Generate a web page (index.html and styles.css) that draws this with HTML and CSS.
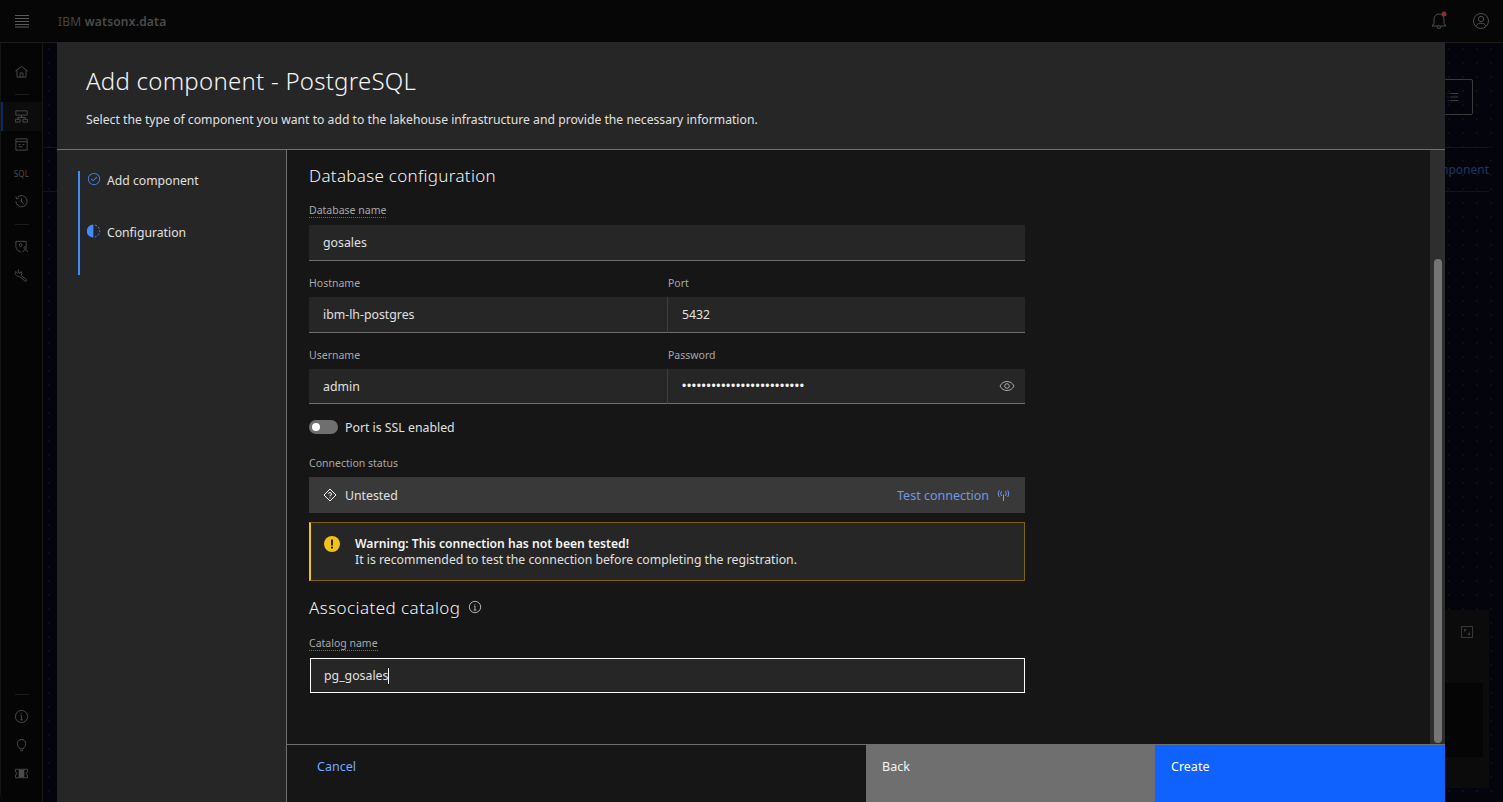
FILE: index.html
```html
<!DOCTYPE html>
<html>
<head>
<title>IBM watsonx.data - Add component</title>
<link rel="stylesheet" href="styles.css">
</head>

<body>
<div class="app">
  <header class="topbar">
    <svg class="menu-icon" viewBox="0 0 16 14"><path d="M1 1.500h14M1 4.500h14M1 7.500h14M1 10.500h14M1 13h14"/></svg>
    <div class="brand">IBM <b>watsonx.data</b></div>
    <div class="top-icons">
      <svg class="ico-bell" viewBox="0 0 20 20"><path d="M3 15l2-2.500V8a5 5 0 0 1 10 0v4.500l2 2.500zM8 15.500a2 2 0 0 0 4 0"/><circle class="red-dot" cx="15" cy="3" r="2.500"/></svg>
      <svg class="ico-user" viewBox="0 0 20 20"><circle cx="10" cy="10" r="7.500"/><circle cx="10" cy="8" r="2.700"/><path d="M5 15.500c1-2.500 2.500-3.300 5-3.300s4 .8 5 3.300"/></svg>
    </div>
  </header>

  <div class="page">
    <nav class="rail">
      <div class="rail-top">
        <div class="rail-item"><svg viewBox="0 0 16 16"><path d="M1.500 7.500L8 2.500l6.500 5M3.200 6.500V14h9.600V6.500M6.500 14V9.500h3V14"/></svg></div>
        <div class="rail-sep"></div>
        <div class="rail-item current"><svg viewBox="0 0 16 16"><path d="M2 2h12v4.500H2zM8 6.500V9M4 11V9h8v2M1.500 11h5v3h-5zM9.500 11h5v3h-5z"/></svg></div>
        <div class="rail-item"><svg viewBox="0 0 16 16"><path d="M2 2h12v12H2zM2 5h12M5 8h2M9 8h2M5 10.500h4"/></svg></div>
        <div class="rail-item sql">SQL</div>
        <div class="rail-item"><svg viewBox="0 0 16 16"><path d="M4 3.200A6 6 0 1 1 2 8M2 2.500l.8 2.700L5.500 4.500M8 4.500V8l2.500 2.500"/></svg></div>
        <div class="rail-sep"></div>
        <div class="rail-item"><svg viewBox="0 0 16 16"><path d="M2 2.500h11V8M2 2.500V8c0 3 2.500 5 5.500 6"/><circle cx="7" cy="6.500" r="1.500"/><circle cx="12" cy="9.500" r="1.300"/><path d="M9.500 14c0-1.500 1-2.300 2.500-2.300s2.500.8 2.500 2.300"/></svg></div>
        <div class="rail-item"><svg viewBox="0 0 16 16"><path d="M4.500 1.500v3.300l2 .8 1-1.800A3.800 3.800 0 0 1 7.700 8l5.500 4.300c1.200 1.200-.3 2.700-1.500 1.600L6 9c-3 .6-5.500-2-4.300-5.200l2.300 2"/></svg></div>
      </div>
      <div class="rail-bottom">
        <div class="rail-sep"></div>
        <div class="rail-item"><svg viewBox="0 0 16 16"><circle cx="8" cy="8" r="6.500"/><path d="M6.500 11.500h3M8 11.500V7H6.800M8 4.500v.8"/></svg></div>
        <div class="rail-item"><svg viewBox="0 0 16 16"><path d="M6 11.500C5.500 9.800 3.500 9 3.500 6a4.500 4.500 0 0 1 9 0c0 3-2 3.800-2.500 5.500zM6.500 13.500h3"/></svg></div>
        <div class="rail-item"><svg viewBox="0 0 16 16"><path d="M1.500 3.500h13V6.500a1.500 1.500 0 0 0 0 3v3h-13v-3a1.500 1.500 0 0 0 0-3z"/><path class="filled" d="M5 4h6v8H5z"/></svg></div>
      </div>
    </nav>

    <main class="behind">
      <div class="behind-head">
        <div class="behind-btn"><svg viewBox="0 0 16 16"><path d="M3 4h1M6 4h9M3 8h1M6 8h9M3 12h1M6 12h9"/></svg></div>
      </div>
      <div class="behind-tabs"><span>Add component</span></div>
      <div class="behind-panel">
        <svg class="behind-expand" viewBox="0 0 12 12"><path d="M.5.500h11v11H.5z"/><path class="filled" d="M3 3h3L3 6zM9 9H6l3-3z"/></svg>
        <div class="behind-inner"></div>
      </div>
    </main>
  </div>
</div>

<div class="modal">
  <div class="modal-head">
    <h1>Add component - PostgreSQL</h1>
    <p>Select the type of component you want to add to the lakehouse infrastructure and provide the necessary information.</p>
  </div>

  <div class="modal-body">
    <aside class="steps">
      <div class="step-list">
        <div class="step">
          <svg viewBox="0 0 32 32"><path class="solid" d="M14 21.414l-5-5.001L10.413 15 14 18.586 21.585 11 23 12.415 14 21.414z"/><path class="solid" d="M16 2a14 14 0 1 0 14 14A14 14 0 0 0 16 2zm0 26a12 12 0 1 1 12-12 12 12 0 0 1-12 12z"/></svg>
          <span>Add component</span>
        </div>
        <div class="step">
          <svg viewBox="0 0 14 14"><path class="solid" d="M6.300.500A6.500 6.500 0 0 0 6.300 13.500z"/><path class="dash" d="M8 1a6.200 6.200 0 0 1 0 12"/></svg>
          <span>Configuration</span>
        </div>
      </div>
    </aside>

    <section class="content">
      <div class="scroller">
        <form class="form">
          <h2>Database configuration</h2>

          <div class="field">
            <label class="dotted">Database name</label>
            <div class="input">gosales</div>
          </div>

          <div class="row">
            <div class="field">
              <label>Hostname</label>
              <div class="input">ibm-lh-postgres</div>
            </div>
            <div class="field">
              <label>Port</label>
              <div class="input">5432</div>
            </div>
          </div>

          <div class="row">
            <div class="field">
              <label>Username</label>
              <div class="input short">admin</div>
            </div>
            <div class="field">
              <label>Password</label>
              <div class="input short password">
                <span class="dots">&bull;&bull;&bull;&bull;&bull;&bull;&bull;&bull;&bull;&bull;&bull;&bull;&bull;&bull;&bull;&bull;&bull;&bull;&bull;&bull;&bull;&bull;&bull;&bull;&bull;</span>
                <svg class="eye" viewBox="0 0 16 16"><path d="M1 8c1.500-3 4-4.500 7-4.500s5.500 1.500 7 4.500c-1.500 3-4 4.500-7 4.500S2.500 11 1 8z"/><circle cx="8" cy="8" r="2.300"/></svg>
              </div>
            </div>
          </div>

          <div class="toggle-row">
            <span class="toggle"><i></i></span>
            <span>Port is SSL enabled</span>
          </div>

          <div class="field status-field">
            <label>Connection status</label>
            <div class="status">
              <svg class="diamond" viewBox="0 0 14 14"><path d="M7 1l6 6-6 6-6-6z"/><path d="M5.500 5.800A1.500 1.500 0 1 1 7 7.500v.8M7 9.500v.8"/></svg>
              <span class="status-text">Untested</span>
              <a class="test-link">Test connection</a>
              <svg class="antenna" viewBox="0 0 14 14"><path d="M7 6v7M5 2.500c-1.200 1.500-1.200 3.500 0 5M9 2.500c1.200 1.500 1.200 3.500 0 5M2.500 1.500c-1.500 2.500-1.500 5 0 7M11.500 1.500c1.500 2.500 1.500 5 0 7"/></svg>
            </div>
          </div>

          <div class="warning">
            <svg viewBox="0 0 16 16"><circle class="warn-bg" cx="8" cy="8" r="8"/><path class="warn-mark" d="M7.100 3.500h1.800v6H7.100zM7 10.800h2v1.800H7z"/></svg>
            <div>
              <b>Warning: This connection has not been tested!</b><br>
              It is recommended to test the connection before completing the registration.
            </div>
          </div>

          <h2 class="catalog-title">Associated catalog
            <svg viewBox="0 0 16 16"><circle cx="8" cy="8" r="6.500"/><path d="M6.500 11.500h3M8 11.500V7H6.800M8 4.500v.8"/></svg>
          </h2>

          <div class="field">
            <label class="dotted">Catalog name</label>
            <div class="input short focused">pg_gosales<span class="caret"></span></div>
          </div>
        </form>
        <div class="track"><div class="thumb"></div></div>
      </div>

      <footer class="modal-foot">
        <a class="foot-btn cancel">Cancel</a>
        <a class="foot-btn back">Back</a>
        <a class="foot-btn create">Create</a>
      </footer>
    </section>
  </div>
</div>
</body>
</html>
```

FILE: styles.css
```css
html, body {
  margin: 0;
  height: 100%;
  overflow: hidden;
  background-color: #04050c;
  background-image: radial-gradient(#0d0e16 1px, transparent 1.2px);
  background-size: 14px 14px;
  font-family: "Noto Sans", Roboto, Arial, sans-serif;
  font-size: 13px;
  color: #f4f4f4;
}
svg {
  display: block;
  fill: none;
  stroke: currentColor;
  stroke-width: 1;
}
.filled {
  fill: currentColor;
  stroke: none;
}

/* page behind the dialog */
.app {
  height: 802px;
  display: flex;
  flex-direction: column;
}
.topbar {
  height: 43px;
  flex: none;
  display: flex;
  align-items: center;
  background: #060606;
  border-bottom: 1px solid #1b1b1b;
  box-sizing: border-box;
  color: #4b4b4b;
}
.menu-icon {
  width: 16px;
  height: 14px;
  margin-left: 14px;
  color: #5a5a5a;
}
.brand {
  margin-left: 28px;
  font-size: 12px;
  color: #454545;
  letter-spacing: .2px;
}
.brand b {
  font-weight: 600;
  color: #4b4b4b;
}
.top-icons {
  margin-left: auto;
  display: flex;
  align-items: center;
  gap: 22px;
  padding-right: 12px;
  color: #4e4e4e;
}
.ico-bell {
  width: 20px;
  height: 20px;
}
.ico-user {
  width: 20px;
  height: 20px;
}
.red-dot {
  fill: #8c2a2e;
  stroke: none;
}
.page {
  flex: 1;
  display: flex;
  min-height: 0;
}
.rail {
  width: 43px;
  flex: none;
  box-sizing: border-box;
  background: #050505;
  border-right: 1px solid #171717;
  border-left: 1px solid #141414;
  border-bottom-left-radius: 8px;
  display: flex;
  flex-direction: column;
  justify-content: space-between;
  padding: 14px 0;
  color: #4c4c4c;
}
.rail-item {
  height: 28.5px;
  display: flex;
  align-items: center;
  justify-content: center;
}
.rail-item svg {
  width: 15px;
  height: 15px;
}
.rail-item.current {
  background: #0c0c0c;
  box-shadow: inset 2px 0 0 #10295f;
}
.rail-item.sql {
  font-size: 8px;
  letter-spacing: .2px;
}
.rail-sep {
  height: 1px;
  width: 14px;
  margin: 8px auto 7.5px;
  background: #1c1c1c;
}
.behind {
  flex: 1;
  position: relative;
  display: flex;
  flex-direction: column;
  padding-right: 14px;
}
.behind-head {
  height: 105px;
  flex: none;
  border-bottom: 1px solid #151515;
  box-sizing: border-box;
  position: relative;
}
.behind-btn {
  position: absolute;
  right: 16px;
  top: 36px;
  width: 90px;
  height: 36px;
  box-sizing: border-box;
  border: 1px solid #3a3a3a;
  border-radius: 2px;
  color: #464646;
}
.behind-btn svg {
  width: 14px;
  height: 14px;
  position: absolute;
  left: 61px;
  top: 10px;
}
.behind-tabs {
  height: 44px;
  flex: none;
  box-sizing: border-box;
  border-bottom: 1px solid #151515;
  display: flex;
  align-items: center;
  justify-content: flex-end;
  color: #1f3561;
  font-size: 12px;
}
.behind-panel {
  position: absolute;
  right: 14px;
  top: 567px;
  width: 200px;
  height: 178px;
  background: #0b0b0b;
}
.behind-expand {
  position: absolute;
  right: 16px;
  top: 16px;
  width: 12px;
  height: 12px;
  color: #3a3a3a;
}
.behind-inner {
  position: absolute;
  left: 0;
  right: 6px;
  top: 73px;
  height: 74px;
  background: #050505;
}

/* dialog */
.modal {
  position: absolute;
  left: 57px;
  top: 42px;
  width: 1388px;
  height: 760px;
  display: flex;
  flex-direction: column;
  background: #262626;
}
.modal-head {
  height: 108px;
  flex: none;
  box-sizing: border-box;
  padding: 22px 0 0 29px;
  border-bottom: 1px solid #6f6f6f;
}
.modal-head h1 {
  margin: 0;
  font-size: 24px;
  line-height: 34px;
  font-weight: 300;
  letter-spacing: .25px;
  color: #f4f4f4;
}
.modal-head p {
  margin: 13px 0 0;
  font-size: 12.2px;
  line-height: 18px;
  color: #e0e0e0;
}
.modal-body {
  flex: 1;
  display: flex;
  min-height: 0;
}
.steps {
  width: 230px;
  flex: none;
  box-sizing: border-box;
  border-right: 1px solid #6f6f6f;
  padding: 21px 0 0 21px;
}
.step-list {
  height: 104px;
  border-left: 2px solid #4589ff;
  padding-left: 7px;
}
.step {
  height: 52px;
  display: flex;
  gap: 6px;
  font-size: 12.2px;
  line-height: 18px;
  color: #e0e0e0;
}
.step svg {
  width: 14px;
  height: 14px;
  margin-top: 1px;
  flex: none;
}
.step span {
  padding-top: 1px;
}
.solid {
  fill: #4589ff;
  stroke: none;
}
.dash {
  stroke: #4589ff;
  stroke-width: 1;
  stroke-dasharray: 2 1.600;
}
.content {
  flex: 1;
  min-width: 0;
  display: flex;
  flex-direction: column;
  background: #161616;
}
.scroller {
  flex: 1;
  min-height: 0;
  display: flex;
}
.form {
  flex: 1;
  box-sizing: border-box;
  padding: 15px 0 0 22px;
  overflow: hidden;
}
.form > * {
  width: 716px;
}
.form h2 {
  margin: 0;
  font-size: 17px;
  line-height: 22px;
  font-weight: 300;
  letter-spacing: .3px;
  color: #f4f4f4;
}
.field {
  flex: 1;
  min-width: 0;
  margin-top: 15px;
}
.form h2 + .field {
  margin-top: 16px;
}
.form .catalog-title + .field {
  margin-top: 17px;
}
.field label {
  display: table;
  font-size: 10.5px;
  line-height: 14px;
  margin-bottom: 7px;
  color: #a8a8a8;
}
.field .dotted {
  border-bottom: 1px dotted #6f6f6f;
  line-height: 13px;
  padding-top: 1px;
  margin-bottom: 7px;
}
.input {
  height: 36px;
  box-sizing: border-box;
  padding: 0 14px;
  display: flex;
  align-items: center;
  background: #262626;
  border-bottom: 1px solid #6f6f6f;
  font-size: 12.3px;
  color: #e0e0e0;
}
.short {
  height: 35px;
}
.row {
  display: flex;
}
.row .field + .field label {
  margin-left: 1px;
}
.row .field + .field .input {
  border-left: 1px solid #3d3d3d;
}
.password {
  justify-content: space-between;
  padding-right: 10px;
}
.dots {
  font-size: 12px;
  letter-spacing: .7px;
  color: #f4f4f4;
  font-family: "Liberation Sans", sans-serif;
}
.eye {
  width: 16px;
  height: 16px;
  color: #a8a8a8;
}
.toggle-row {
  margin-top: 15px;
  display: flex;
  align-items: center;
  gap: 7px;
  height: 16px;
  font-size: 12.3px;
  color: #e0e0e0;
}
.toggle {
  width: 29px;
  height: 14px;
  border-radius: 7px;
  background: #6f6f6f;
  position: relative;
}
.toggle i {
  position: absolute;
  left: 3px;
  top: 3px;
  width: 8px;
  height: 8px;
  border-radius: 50%;
  background: #fff;
}
.status-field {
  margin-top: 21px;
}
.status {
  height: 36px;
  display: flex;
  align-items: center;
  background: #393939;
  padding: 0 15px 0 14px;
  box-sizing: border-box;
  font-size: 12.3px;
  color: #e0e0e0;
}
.diamond {
  width: 14px;
  height: 14px;
  margin-right: 8px;
  color: #f4f4f4;
}
.status-text {
  flex: 1;
}
.test-link {
  color: #78a9ff;
  opacity: .85;
  font-size: 12.5px;
  margin-right: -1px;
}
.antenna {
  width: 13px;
  height: 13px;
  margin-left: 9px;
  color: #78a9ff;
}
.warning {
  margin-top: 9px;
  height: 59px;
  box-sizing: border-box;
  background: #262626;
  border: 1px solid #7a6412;
  border-left: 2px solid #f1c21b;
  display: flex;
  align-items: center;
  gap: 15px;
  padding-left: 13px;
  font-size: 12.25px;
  line-height: 16px;
  color: #e0e0e0;
}
.warning svg {
  width: 16px;
  height: 16px;
  flex: none;
  margin-top: -15px;
}
.warning b {
  font-size: 12.15px;
  font-weight: 600;
  color: #f4f4f4;
}
.warn-bg {
  fill: #f1c21b;
  stroke: none;
}
.warn-mark {
  fill: #161616;
  stroke: none;
}
.form .catalog-title {
  margin-top: 16px;
  display: flex;
  align-items: center;
  gap: 8px;
  letter-spacing: .44px;
}
.catalog-title svg {
  width: 14px;
  height: 14px;
  color: #c6c6c6;
  margin-top: -3px;
}
.focused {
  outline: 1px solid #fff;
  outline-offset: -1px;
  border-bottom: none;
  margin-left: 1px;
}
.caret {
  width: 1px;
  height: 16px;
  background: #fff;
}
.track {
  width: 15px;
  flex: none;
  background: #2e2e2e;
  position: relative;
}
.thumb {
  position: absolute;
  left: 4px;
  top: 109px;
  width: 8px;
  height: 484px;
  border-radius: 4px;
  background: #757575;
}
.modal-foot {
  height: 58px;
  flex: none;
  box-sizing: border-box;
  display: flex;
  border-top: 1px solid #6f6f6f;
  font-size: 12.5px;
}
.foot-btn {
  box-sizing: border-box;
  padding: 13px 16px 0;
}
.cancel {
  flex: 1;
  padding-left: 30px;
  color: #78a9ff;
}
.back {
  width: 289px;
  background: #6f6f6f;
  color: #f4f4f4;
}
.create {
  width: 290px;
  background: #0f62fe;
  color: #fff;
}
```
